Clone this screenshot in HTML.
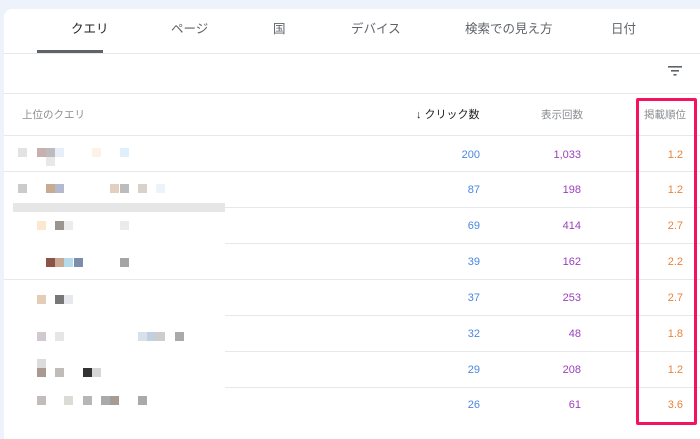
<!DOCTYPE html>
<html><head><meta charset="utf-8">
<style>
*{margin:0;padding:0;box-sizing:border-box}
body{width:700px;height:427px;background:#eef3fb;font-family:"Liberation Sans","Noto Sans CJK JP",sans-serif;position:relative;overflow:hidden}
.card{position:absolute;left:4px;top:9px;width:700px;height:430px;background:#fff;border-radius:8px 0 0 0}
.tab{position:absolute;top:18px;font-size:12.5px;color:#5f6368}
.line{position:absolute;left:4px;right:0;height:1px;background:#e6e8eb}
.num{position:absolute;font-size:11px;text-align:right;width:60px}
.c{color:#4a86e0}.i{color:#9c3fbd}.p{color:#e8833a}
.b{position:absolute;width:9px;height:9px}
</style></head><body>
<div class="card"></div>
<div class="tab" style="left:71px;color:#202124">クエリ</div>
<div class="tab" style="left:171px">ページ</div>
<div class="tab" style="left:273px">国</div>
<div class="tab" style="left:351px">デバイス</div>
<div class="tab" style="left:465px">検索での見え方</div>
<div class="tab" style="left:611px">日付</div>
<div style="position:absolute;left:37px;top:50px;width:66px;height:3px;background:#5f6368"></div>
<div class="line" style="top:53px"></div>
<svg style="position:absolute;left:668px;top:65px" width="14" height="12"><g fill="#5f6368"><rect x="0" y="1" width="14" height="1.6"/><rect x="3" y="5" width="8" height="1.6"/><rect x="5.5" y="9" width="3" height="1.6"/></g></svg>
<div class="line" style="top:93px"></div>
<div style="position:absolute;left:22px;top:107px;font-size:10.5px;color:#8a8d91">上位のクエリ</div>
<div style="position:absolute;left:416px;top:106px;font-size:11px;color:#202124">↓ クリック数</div>
<div style="position:absolute;left:541px;top:107px;font-size:10.5px;color:#8a8d91">表示回数</div>
<div style="position:absolute;left:644px;top:107px;font-size:10.5px;color:#8a8d91">掲載順位</div>
<div class="line" style="top:135px"></div>
<div class="line" style="top:171px"></div>
<div class="line" style="top:207px;left:225px"></div>
<div class="line" style="top:243px;left:225px"></div>
<div class="line" style="top:279px"></div>
<div class="line" style="top:315px;left:225px"></div>
<div class="line" style="top:351px;left:225px"></div>
<div class="line" style="top:387px;left:225px"></div>
<div style="position:absolute;left:13px;top:203px;width:212px;height:9px;background:#e6e6e6"></div>

<div class="num c" style="left:420px;top:149px">200</div><div class="num i" style="left:521px;top:149px">1,033</div><div class="num p" style="left:623px;top:149px">1.2</div>
<div class="num c" style="left:420px;top:184px">87</div><div class="num i" style="left:521px;top:184px">198</div><div class="num p" style="left:623px;top:184px">1.2</div>
<div class="num c" style="left:420px;top:220px">69</div><div class="num i" style="left:521px;top:220px">414</div><div class="num p" style="left:623px;top:220px">2.7</div>
<div class="num c" style="left:420px;top:256px">39</div><div class="num i" style="left:521px;top:256px">162</div><div class="num p" style="left:623px;top:256px">2.2</div>
<div class="num c" style="left:420px;top:292px">37</div><div class="num i" style="left:521px;top:292px">253</div><div class="num p" style="left:623px;top:292px">2.7</div>
<div class="num c" style="left:420px;top:328px">32</div><div class="num i" style="left:521px;top:328px">48</div><div class="num p" style="left:623px;top:328px">1.8</div>
<div class="num c" style="left:420px;top:364px">29</div><div class="num i" style="left:521px;top:364px">208</div><div class="num p" style="left:623px;top:364px">1.2</div>
<div class="num c" style="left:420px;top:399px">26</div><div class="num i" style="left:521px;top:399px">61</div><div class="num p" style="left:623px;top:399px">3.6</div>

<div class="b" style="left:18px;top:148px;background:#e3e3e3"></div>
<div class="b" style="left:37px;top:148px;background:#c8b0b0"></div>
<div class="b" style="left:46px;top:148px;background:#bcbcbc"></div>
<div class="b" style="left:55px;top:148px;background:#e6eefa"></div>
<div class="b" style="left:46px;top:157px;background:#e8e8e8"></div>
<div class="b" style="left:92px;top:148px;background:#fdf2e8"></div>
<div class="b" style="left:120px;top:148px;background:#e0f0fb"></div>
<div class="b" style="left:18px;top:184px;background:#cbcbcb"></div>
<div class="b" style="left:46px;top:184px;background:#c9ab92"></div>
<div class="b" style="left:55px;top:184px;background:#b4b9cf"></div>
<div class="b" style="left:110px;top:184px;background:#e2cfbd"></div>
<div class="b" style="left:120px;top:184px;background:#bcbcbc"></div>
<div class="b" style="left:138px;top:184px;background:#d9d2ca"></div>
<div class="b" style="left:156px;top:184px;background:#eaf4fa"></div>
<div class="b" style="left:37px;top:221px;background:#fde8cf"></div>
<div class="b" style="left:55px;top:221px;background:#9a958f"></div>
<div class="b" style="left:64px;top:221px;background:#ececec"></div>
<div class="b" style="left:120px;top:221px;background:#ebebeb"></div>
<div class="b" style="left:46px;top:258px;background:#8a5448"></div>
<div class="b" style="left:55px;top:258px;background:#c8a994"></div>
<div class="b" style="left:64px;top:258px;background:#b4dbe9"></div>
<div class="b" style="left:74px;top:258px;background:#7b8da8"></div>
<div class="b" style="left:120px;top:258px;background:#a5a5a5"></div>
<div class="b" style="left:37px;top:295px;background:#e3cdb6"></div>
<div class="b" style="left:55px;top:295px;background:#777"></div>
<div class="b" style="left:64px;top:295px;background:#e6e8ee"></div>
<div class="b" style="left:37px;top:332px;background:#d2c8d0"></div>
<div class="b" style="left:55px;top:332px;background:#e6e6e6"></div>
<div class="b" style="left:138px;top:332px;background:#d7e1ec"></div>
<div class="b" style="left:147px;top:332px;background:#c1cfdf"></div>
<div class="b" style="left:156px;top:332px;background:#cdcdcd"></div>
<div class="b" style="left:175px;top:332px;background:#aaa"></div>
<div class="b" style="left:37px;top:368px;background:#a89a90"></div>
<div class="b" style="left:37px;top:359px;background:#dcdcdc"></div>
<div class="b" style="left:55px;top:368px;background:#c0bcba"></div>
<div class="b" style="left:83px;top:368px;background:#333"></div>
<div class="b" style="left:92px;top:368px;background:#d6d6d6"></div>
<div class="b" style="left:37px;top:396px;background:#c2bcba"></div>
<div class="b" style="left:64px;top:396px;background:#dcdcd6"></div>
<div class="b" style="left:83px;top:396px;background:#b8b6b4"></div>
<div class="b" style="left:101px;top:396px;background:#aaa"></div>
<div class="b" style="left:110px;top:396px;background:#a69c94"></div>
<div class="b" style="left:138px;top:396px;background:#aaa"></div>

<div style="position:absolute;left:636px;top:98px;width:61px;height:327px;border:3px solid #f5135f;border-radius:2px"></div>
</body></html>
